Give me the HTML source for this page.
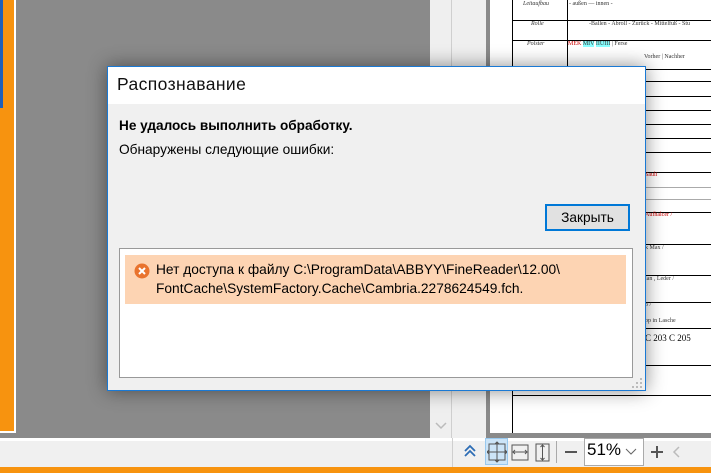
<!DOCTYPE html>
<html><head><meta charset="utf-8"><style>
*{margin:0;padding:0;box-sizing:border-box}
body{width:711px;height:473px;overflow:hidden;position:relative;background:#8a8a8a;font-family:"Segoe UI","Liberation Sans","DejaVu Sans",sans-serif}
.a{position:absolute}
.hl{position:absolute;left:512px;right:0;height:1px;background:#000}
.doc{font-family:"Liberation Serif",serif;font-size:6px;color:#333;position:absolute;white-space:nowrap}
</style></head><body>
<div class="a" style="left:0;top:0;width:16px;height:433px;background:#f7930f;border-right:2px solid #fff;border-bottom:2px solid #fff"></div>
<div class="a" style="left:0;top:0;width:3px;height:108px;background:#1f5fb8"></div>
<div class="a" style="left:430px;top:0;width:22px;height:438px;background:#efefef;border-right:1px solid #cfcfcf"></div>
<div class="a" style="left:452px;top:0;width:34px;height:438px;background:#efefef"></div>
<div class="a" style="left:486px;top:0;width:4px;height:438px;background:#8a8a8a"></div>
<div class="a" style="left:490px;top:0;width:221px;height:433px;background:#fff"></div>
<div class="a" style="left:512px;top:0;width:1px;height:433px;background:#000"></div>
<div class="a" style="left:567px;top:0;width:1px;height:96px;background:#000"></div>
<div class="hl" style="top:20px"></div><div class="hl" style="top:40px"></div><div class="hl" style="top:69px"></div><div class="hl" style="top:81px"></div><div class="hl" style="top:96px"></div>
<div class="hl" style="top:110px"></div><div class="hl" style="top:124px"></div><div class="hl" style="top:138px"></div><div class="hl" style="top:152px"></div><div class="hl" style="top:172px"></div>
<div class="hl" style="top:187px;background:#aaa"></div><div class="hl" style="top:199px;background:#aaa"></div><div class="hl" style="top:212px"></div><div class="hl" style="top:244px"></div><div class="hl" style="top:275px"></div><div class="hl" style="top:302px"></div><div class="hl" style="top:328px"></div><div class="hl" style="top:365px"></div><div class="hl" style="top:395px"></div>
<div class="doc" style="left:523px;top:1px;font-style:italic">Leitaufbau</div><div class="doc" style="left:569px;top:1px">- außen — innen -</div>
<div class="doc" style="left:531px;top:21px;font-style:italic">Rolle</div><div class="doc" style="left:589px;top:21px">-Ballen - Abroll - Zurück - Mittelfuß - Stu</div>
<div class="doc" style="left:527px;top:41px;font-style:italic">Polster</div><div class="doc" style="left:568px;top:41px"><span style="color:#c00">MEK</span> <span style="background:#8ff">MIV</span> <span style="background:#8ff">IIUIII</span> | Ferse</div>
<div class="doc" style="left:644px;top:54px">Vorher | Nachher</div>
<div class="doc" style="left:645px;top:172px;color:#c00">Sauli</div>
<div class="doc" style="left:645px;top:212px;color:#c00">Aufhalcer /</div>
<div class="doc" style="left:645px;top:245px">k Max /</div>
<div class="doc" style="left:645px;top:276px">lan , Leder /</div>
<div class="doc" style="left:645px;top:302px">3 /</div>
<div class="doc" style="left:645px;top:318px">pp in Lasche</div>
<div class="doc" style="left:645px;top:333px;font-size:9px;color:#000">C 203 C 205</div>
<svg class="a" style="left:434px;top:421px" width="14" height="10"><path d="M2 2l5 5 5-5" stroke="#bbb" stroke-width="1.5" fill="none"/></svg>
<div class="a" style="left:0;top:438px;width:711px;height:3px;background:#fff"></div>
<div class="a" style="left:0;top:441px;width:711px;height:26px;background:#f0f0f0"></div>
<div class="a" style="left:452px;top:438px;width:1px;height:29px;background:#cfcfcf"></div>
<div class="a" style="left:0;top:467px;width:711px;height:6px;background:#f7930f"></div>
<svg class="a" style="left:462px;top:443px" width="16" height="16"><path d="M3 8l5-5 5 5M3 13l5-5 5 5" stroke="#2d6db5" stroke-width="1.8" fill="none"/></svg>
<div class="a" style="left:485px;top:438px;width:23px;height:27px;background:#cce4f7;border:1px solid #99c9ef"></div>
<svg class="a" style="left:487px;top:441px" width="20" height="22"><rect x="2" y="3" width="16" height="16" fill="none" stroke="#555"/><path d="M10 1v20M0 11h20M8 3l2-2 2 2M8 19l2 2 2-2M2 9l-2 2 2 2M18 9l2 2-2 2" stroke="#555" fill="none"/></svg>
<svg class="a" style="left:510px;top:441px" width="20" height="22"><rect x="2" y="4" width="16" height="15" fill="none" stroke="#555"/><path d="M3 11h14M5 9l-2 2 2 2M15 9l2 2-2 2" stroke="#555" fill="none"/></svg>
<svg class="a" style="left:533px;top:441px" width="20" height="22"><rect x="3" y="3" width="13" height="17" fill="none" stroke="#555"/><path d="M9.5 4v15M7.5 6l2-2 2 2M7.5 17l2 2 2-2" stroke="#555" fill="none"/></svg>
<div class="a" style="left:556px;top:441px;width:1px;height:22px;background:#aaa"></div>
<div class="a" style="left:565px;top:451px;width:12px;height:2px;background:#555"></div>
<div class="a" style="left:584px;top:438px;width:60px;height:28px;background:#fff;border:1px solid #aaa"></div>
<div class="a" style="left:587px;top:440px;font-size:17px;color:#000">51%</div>
<svg class="a" style="left:625px;top:448px" width="12" height="8"><path d="M1 1l5 5 5-5" stroke="#666" fill="none"/></svg>
<div class="a" style="left:651px;top:451px;width:12px;height:2px;background:#555"></div>
<div class="a" style="left:656px;top:446px;width:2px;height:12px;background:#555"></div>
<svg class="a" style="left:672px;top:445px" width="10" height="14"><path d="M7 2l-5 5 5 5" stroke="#bbb" stroke-width="1.5" fill="none"/></svg>
<div class="a" style="left:107px;top:66px;width:539px;height:325px;background:#f0f0f0;border:1px solid #1a79d4;box-shadow:0 0 18px rgba(0,0,0,.45)">
 <div class="a" style="left:0;top:0;width:537px;height:37px;background:#fff"></div>
 <div class="a" style="left:9px;top:7px;font-size:17.5px;color:#111;letter-spacing:0.4px">Распознавание</div>
 <div class="a" style="left:11px;top:51px;font-size:13.6px;font-weight:bold;color:#000">Не удалось выполнить обработку.</div>
 <div class="a" style="left:11px;top:75px;font-size:13.7px;color:#000">Обнаружены следующие ошибки:</div>
 <div class="a" style="left:437px;top:137px;width:85px;height:27px;background:#e1e1e1;border:2px solid #0078d7;font-size:13.7px;text-align:center;line-height:23px;color:#000">Закрыть</div>
 <div class="a" style="left:11px;top:181px;width:514px;height:130px;background:#fff;border:1px solid #999">
  <div class="a" style="left:5px;top:6px;width:501px;height:49px;background:#fdd4b3"></div>
  <svg class="a" style="left:14px;top:14px" width="16" height="16"><circle cx="8" cy="8" r="7.5" fill="#e9732d"/><path d="M5 5l6 6M11 5l-6 6" stroke="#fff" stroke-width="2"/></svg>
  <div class="a" style="left:36px;top:11px;font-size:13.75px;line-height:19px;color:#000;white-space:nowrap">Нет доступа к файлу C:\ProgramData\ABBYY\FineReader\12.00\<br>FontCache\SystemFactory.Cache\Cambria.2278624549.fch.</div>
 </div>
 <svg class="a" style="left:524px;top:311px" width="12" height="12"><g fill="#bbb"><rect x="8" y="0" width="2" height="2"/><rect x="4" y="4" width="2" height="2"/><rect x="8" y="4" width="2" height="2"/><rect x="0" y="8" width="2" height="2"/><rect x="4" y="8" width="2" height="2"/><rect x="8" y="8" width="2" height="2"/></g></svg>
</div>
</body></html>
